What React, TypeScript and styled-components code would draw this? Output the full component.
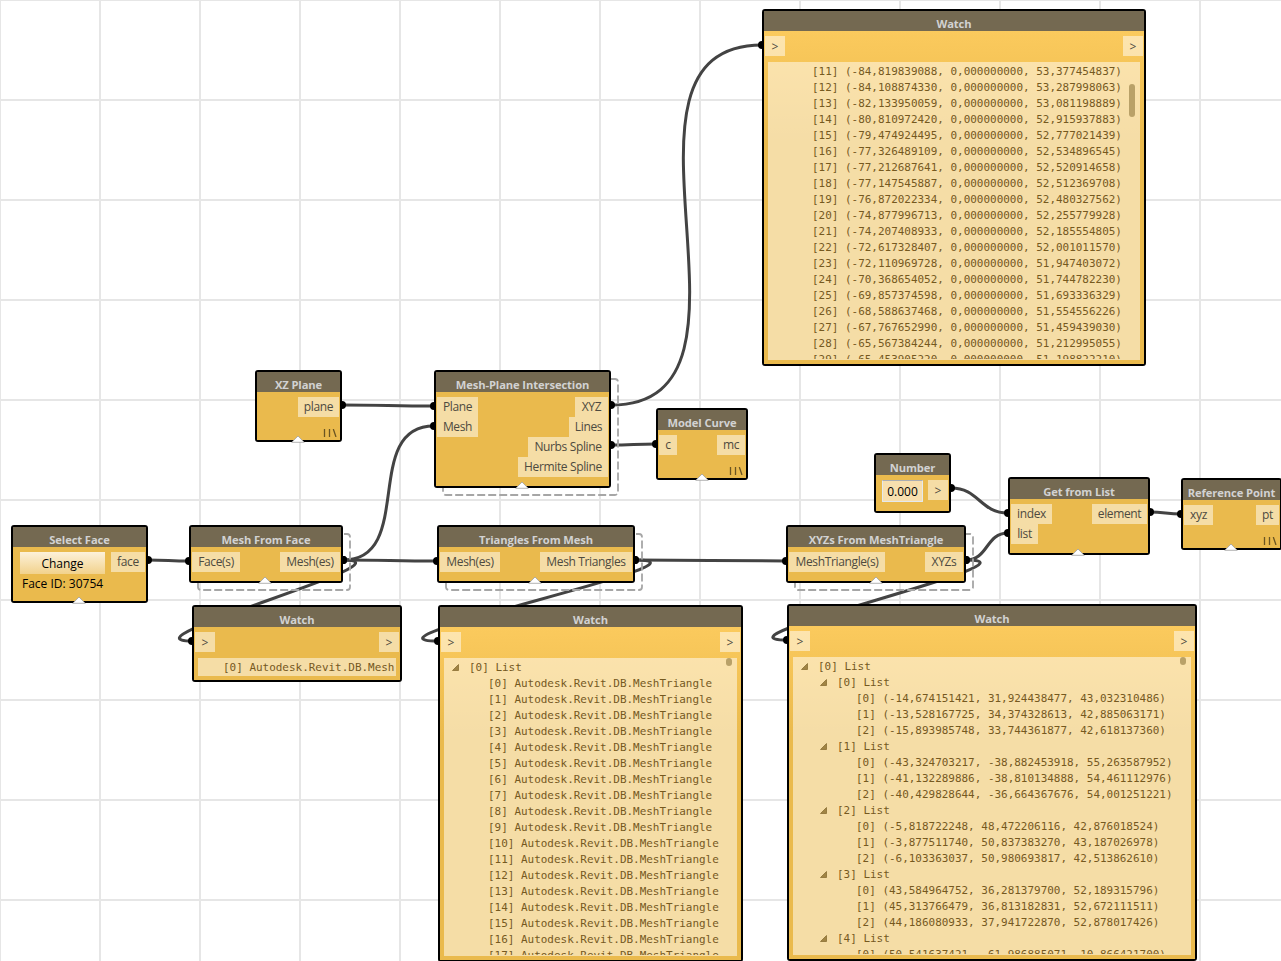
import React from "react";
import styled, { createGlobalStyle } from "styled-components";

const GlobalStyle = createGlobalStyle`
  * { box-sizing: border-box; }
  body { margin: 0; background: #fff; overflow: hidden; font-family: "Open Sans", "Noto Sans", sans-serif; }
`;

const Canvas = styled.main`
  position: relative;
  width: 1281px;
  height: 961px;
  overflow: hidden;
  background-color: #fff;
  background-image:
    linear-gradient(to right, #e6e6e6 0 1px, transparent 1px 99px, #e6e6e6 99px 100px),
    linear-gradient(to bottom, #e6e6e6 0 1px, transparent 1px 99px, #e6e6e6 99px 100px);
  background-size: 100px 100px;
`;

const WireLayer = styled.svg`
  position: absolute;
  inset: 0;
`;

interface Frame {
  $x: number;
  $y: number;
  $w: number;
  $h: number;
}

const NodeFrame = styled.section<Frame>`
  position: absolute;
  left: ${(p) => p.$x}px;
  top: ${(p) => p.$y}px;
  width: ${(p) => p.$w}px;
  height: ${(p) => p.$h}px;
  display: flex;
  flex-direction: column;
  border: 2px solid #000;
  border-radius: 3px;
  background: #000;
`;

const Title = styled.h2`
  flex: none;
  margin: 0;
  height: 20px;
  padding-top: 4px;
  background: #746951;
  color: #d2d2d2;
  font-size: 11.2px;
  letter-spacing: -0.1px;
  font-weight: 700;
  line-height: 18px;
  text-align: center;
  white-space: nowrap;
`;

const Body = styled.div<{ $glow?: boolean }>`
  flex: 1;
  min-height: 0;
  display: flex;
  flex-direction: column;
  padding: 5px 1px 0;
  background: ${(p) =>
    p.$glow ? "linear-gradient(#fbca5d 0, #eaba4d 110px)" : "#eaba4d"};
`;

const PortRow = styled.div`
  display: flex;
  justify-content: space-between;
`;

const PortColumn = styled.div<{ $end?: boolean }>`
  display: flex;
  flex-direction: column;
  align-items: ${(p) => (p.$end ? "flex-end" : "stretch")};
`;

const Port = styled.div<{ $w: number }>`
  width: ${(p) => p.$w}px;
  height: 20px;
  background: rgba(255, 255, 255, 0.5);
  color: #4d4a40;
  font-size: 12px;
  letter-spacing: -0.36px;
  line-height: 20px;
  text-align: center;
  white-space: nowrap;
`;

const ArrowPort = styled(Port)`
  padding-top: 1px;
  letter-spacing: 0;
`;

const ChangeButton = styled.button`
  width: 85px;
  height: 22px;
  margin: 0 6px 0 6px;
  padding: 1px 0 0;
  border: 0;
  background: linear-gradient(#fdf1da, #f2d28c);
  color: #000;
  font: 12px/21px "Open Sans", sans-serif;
`;

const FaceId = styled.p`
  margin: 1px 0 0 8px;
  font-size: 12px;
  line-height: 18px;
  color: #000;
  white-space: nowrap;
`;

const NumberField = styled.div`
  width: 41px;
  height: 22px;
  margin-left: 5px;
  padding-top: 1px;
  border: 1px solid #e3e9ef;
  border-top-color: #abadb3;
  border-radius: 1px;
  background: #f8dfae;
  color: #000;
  font-size: 12px;
  line-height: 20px;
  text-align: center;
`;

const Output = styled.div<{ $h: number }>`
  position: relative;
  height: ${(p) => p.$h}px;
  margin: 6px 3px 0;
  padding: 1px 0;
  background: rgba(255, 255, 255, 0.5);
`;

const Lines = styled.div`
  height: 100%;
  padding-top: 1px;
  overflow: hidden;
`;

const Line = styled.div<{ $level: number }>`
  display: flex;
  align-items: center;
  height: 16px;
  padding-left: ${(p) => 8 + p.$level * 19}px;
  color: #75591f;
  font: 10.96px/16px "DejaVu Sans Mono", monospace;
  white-space: pre;
`;

const Gutter = styled.span`
  flex: none;
  display: flex;
  width: 17px;
  margin-bottom: 2px;
`;

const Thumb = styled.i<{ $top: number; $h: number }>`
  position: absolute;
  right: 5px;
  top: ${(p) => p.$top}px;
  width: 6px;
  height: ${(p) => p.$h}px;
  border-radius: 3px;
  background: #b9a168;
`;

const PreviewHandle = styled.svg<{ $x: number }>`
  position: absolute;
  left: ${(p) => p.$x}px;
  bottom: -3px;
`;

const LacingMark = styled.svg`
  position: absolute;
  right: 3px;
  bottom: 3px;
`;

function Handle({ x }: { x: number }) {
  return (
    <PreviewHandle $x={x - 9} width="14" height="8" viewBox="0 0 14 8">
      <path d="M0.8 7.3 L7 1 L13.2 7.3 Z" fill="#fff" stroke="#a0a0a0" strokeWidth="0.8" />
    </PreviewHandle>
  );
}

function Lacing() {
  return (
    <LacingMark width="14" height="8" viewBox="0 0 14 8">
      <path d="M1.5 0V8M6.5 0V8M10.3 0L13 8" stroke="#6b5522" strokeWidth="1.3" fill="none" />
    </LacingMark>
  );
}

type PortDef = [string, number];

interface NodeProps {
  x: number;
  y: number;
  w: number;
  h: number;
  title: string;
  inputs?: PortDef[];
  outputs?: PortDef[];
  handle?: number;
  lacing?: boolean;
}

function GraphNode({ x, y, w, h, title, inputs = [], outputs = [], handle, lacing }: NodeProps) {
  return (
    <NodeFrame $x={x} $y={y} $w={w} $h={h}>
      <Title>{title}</Title>
      <Body>
        <PortRow>
          <PortColumn>
            {inputs.map(([name, pw]) => <Port key={name} $w={pw}>{name}</Port>)}
          </PortColumn>
          <PortColumn $end>
            {outputs.map(([name, pw]) => <Port key={name} $w={pw}>{name}</Port>)}
          </PortColumn>
        </PortRow>
      </Body>
      {lacing && <Lacing />}
      {handle !== undefined && <Handle x={handle} />}
    </NodeFrame>
  );
}

interface Entry {
  level: number;
  text: string;
  open?: boolean;
}

interface WatchProps {
  x: number;
  y: number;
  w: number;
  h: number;
  listHeight: number;
  entries: Entry[];
  glow?: boolean;
  thumb?: [number, number];
}

function WatchNode({ x, y, w, h, listHeight, entries, glow, thumb }: WatchProps) {
  return (
    <NodeFrame $x={x} $y={y} $w={w} $h={h}>
      <Title>Watch</Title>
      <Body $glow={glow}>
        <PortRow>
          <ArrowPort $w={20}>&gt;</ArrowPort>
          <ArrowPort $w={20}>&gt;</ArrowPort>
        </PortRow>
        <Output $h={listHeight}>
          <Lines>
            {entries.map((e, i) => (
              <Line key={i} $level={e.level}>
                <Gutter>
                  {e.open && (
                    <svg width="7" height="7" viewBox="0 0 7 7">
                      <path d="M0.5 6.5 L6.5 0.5 V6.5 Z" fill="#a08444" stroke="#8a6f34" strokeWidth="0.8" />
                    </svg>
                  )}
                </Gutter>
                {e.text}
              </Line>
            ))}
          </Lines>
          {thumb && <Thumb $top={thumb[0]} $h={thumb[1]} />}
        </Output>
      </Body>
    </NodeFrame>
  );
}

const intersectionRows: [string, string][] = [
  ["84,819839088", "53,377454837"],
  ["84,108874330", "53,287998063"],
  ["82,133950059", "53,081198889"],
  ["80,810972420", "52,915937883"],
  ["79,474924495", "52,777021439"],
  ["77,326489109", "52,534896545"],
  ["77,212687641", "52,520914658"],
  ["77,147545887", "52,512369708"],
  ["76,872022334", "52,480327562"],
  ["74,877996713", "52,255779928"],
  ["74,207408933", "52,185554805"],
  ["72,617328407", "52,001011570"],
  ["72,110969728", "51,947403072"],
  ["70,368654052", "51,744782230"],
  ["69,857374598", "51,693336329"],
  ["68,588637468", "51,554556226"],
  ["67,767652990", "51,459439030"],
  ["65,567384244", "51,212995055"],
  ["65,453905220", "51,198822210"],
];

const intersectionEntries: Entry[] = intersectionRows.map(([a, b], i) => ({
  level: 1,
  text: `[${i + 11}] (-${a}, 0,000000000, ${b})`,
}));

const triangleEntries: Entry[] = [
  { level: 0, text: "[0] List", open: true },
  ...Array.from({ length: 18 }, (_, i) => ({
    level: 1,
    text: `[${i}] Autodesk.Revit.DB.MeshTriangle`,
  })),
];

const vertexGroups: string[][] = [
  [
    "(-14,674151421, 31,924438477, 43,032310486)",
    "(-13,528167725, 34,374328613, 42,885063171)",
    "(-15,893985748, 33,744361877, 42,618137360)",
  ],
  [
    "(-43,324703217, -38,882453918, 55,263587952)",
    "(-41,132289886, -38,810134888, 54,461112976)",
    "(-40,429828644, -36,664367676, 54,001251221)",
  ],
  [
    "(-5,818722248, 48,472206116, 42,876018524)",
    "(-3,877511740, 50,837383270, 43,187026978)",
    "(-6,103363037, 50,980693817, 42,513862610)",
  ],
  [
    "(43,584964752, 36,281379700, 52,189315796)",
    "(45,313766479, 36,813182831, 52,672111511)",
    "(44,186080933, 37,941722870, 52,878017426)",
  ],
  ["(50,541637421, -61,986885071, 10,866421700)"],
];

const vertexEntries: Entry[] = [
  { level: 0, text: "[0] List", open: true },
  ...vertexGroups.flatMap((group, g) => [
    { level: 1, text: `[${g}] List`, open: true },
    ...group.map((v, i) => ({ level: 2, text: `[${i}] ${v}` })),
  ]),
];

type Wire = [number, number, number, number];

const wires: Wire[] = [
  [342, 405, 434, 406],
  [343, 560, 434, 426],
  [611, 405, 762, 45],
  [611, 445, 656, 444],
  [951, 488, 1008, 513],
  [966, 560, 1008, 533],
  [1150, 512, 1181, 514],
  [148, 560, 189, 561],
  [343, 560, 437, 561],
  [635, 560, 786, 561],
  [343, 560, 192, 641],
  [635, 560, 438, 641],
  [966, 560, 787, 640],
];

function wirePath([x1, y1, x2, y2]: Wire) {
  const reach = 0.45 * Math.hypot(x2 - x1, y2 - y1);
  return `M${x1} ${y1} C${x1 + reach} ${y1} ${x2 - reach} ${y2} ${x2} ${y2}`;
}

const stacks = [
  [443, 379, 175, 116],
  [198, 534, 152, 56],
  [446, 534, 196, 56],
  [795, 534, 178, 56],
];

export default function App() {
  return (
    <>
      <GlobalStyle />
      <Canvas>
        <WireLayer width="1281" height="961" viewBox="0 0 1281 961">
          {wires.map((w, i) => (
            <g key={i}>
              <path d={wirePath(w)} fill="none" stroke="#434343" strokeWidth="3" />
              <circle cx={w[0]} cy={w[1]} r="4" />
              <circle cx={w[2]} cy={w[3]} r="4" />
            </g>
          ))}
          {stacks.map(([x, y, w, h]) => (
            <rect key={x} x={x} y={y} width={w} height={h} rx="3" fill="none" stroke="#a6a6a6" strokeWidth="1.8" strokeDasharray="8 3" />
          ))}
        </WireLayer>

        <WatchNode x={762} y={9} w={384} h={357} listHeight={298} entries={intersectionEntries} glow thumb={[22, 33]} />
        <GraphNode x={255} y={370} w={87} h={72} title="XZ Plane" outputs={[["plane", 41]]} handle={43} lacing />
        <GraphNode
          x={434} y={370} w={177} h={118} title="Mesh-Plane Intersection"
          inputs={[["Plane", 41], ["Mesh", 41]]}
          outputs={[["XYZ", 33], ["Lines", 39], ["Nurbs Spline", 80], ["Hermite Spline", 90]]}
          handle={88}
        />
        <GraphNode x={656} y={408} w={92} h={72} title="Model Curve" inputs={[["c", 18]]} outputs={[["mc", 28]]} handle={46} lacing />

        <NodeFrame $x={874} $y={453} $w={77} $h={60}>
          <Title>Number</Title>
          <Body>
            <PortRow>
              <NumberField>0.000</NumberField>
              <ArrowPort $w={20}>&gt;</ArrowPort>
            </PortRow>
          </Body>
        </NodeFrame>

        <GraphNode x={1008} y={477} w={142} h={78} title="Get from List" inputs={[["index", 41], ["list", 27]]} outputs={[["element", 55]]} handle={70} />
        <GraphNode x={1181} y={478} w={101} h={72} title="Reference Point" inputs={[["xyz", 29]]} outputs={[["pt", 23]]} handle={50} lacing />

        <NodeFrame $x={11} $y={525} $w={137} $h={78}>
          <Title>Select Face</Title>
          <Body>
            <PortRow>
              <ChangeButton>Change</ChangeButton>
              <Port $w={34}>face</Port>
            </PortRow>
            <FaceId>Face ID: 30754</FaceId>
          </Body>
          <Handle x={68} />
        </NodeFrame>

        <GraphNode x={189} y={525} w={154} h={58} title="Mesh From Face" inputs={[["Face(s)", 48]]} outputs={[["Mesh(es)", 60]]} handle={76} />
        <GraphNode x={437} y={525} w={198} h={58} title="Triangles From Mesh" inputs={[["Mesh(es)", 60]]} outputs={[["Mesh Triangles", 92]]} handle={98} />
        <GraphNode x={786} y={525} w={180} h={58} title="XYZs From MeshTriangle" inputs={[["MeshTriangle(s)", 96]]} outputs={[["XYZs", 38]]} handle={90} />

        <WatchNode x={192} y={605} w={210} h={77} listHeight={18} entries={[{ level: 0, text: "[0] Autodesk.Revit.DB.Mesh" }]} />
        <WatchNode x={438} y={605} w={305} h={357} listHeight={298} entries={triangleEntries} glow thumb={[0, 8]} />
        <WatchNode x={787} y={604} w={410} h={357} listHeight={298} entries={vertexEntries} glow thumb={[0, 8]} />
      </Canvas>
    </>
  );
}
